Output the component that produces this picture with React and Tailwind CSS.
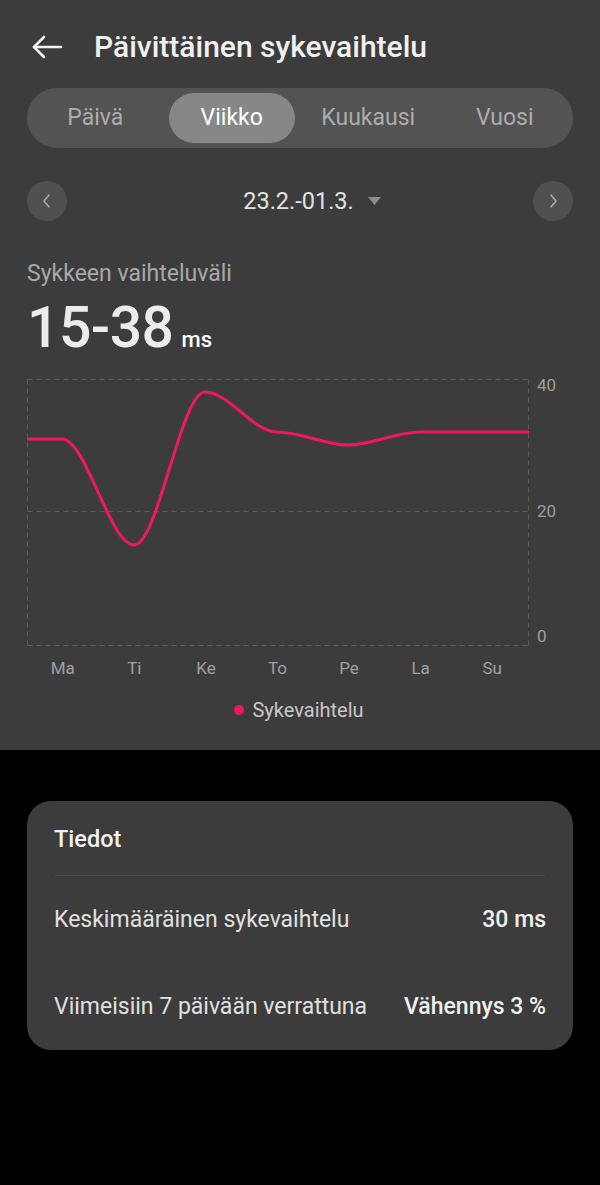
import React from 'react';

const days = ['Ma', 'Ti', 'Ke', 'To', 'Pe', 'La', 'Su'];
const tabs = ['Päivä', 'Viikko', 'Kuukausi', 'Vuosi'];

const HrvChart = () => (
    <svg width="546" height="276" viewBox="0 0 546 276" className="block">
        {/* grid, offset: x-27, y-373 */}
        <g transform="translate(0 4)">
            <g stroke="#5c5c5c" strokeWidth="1" strokeDasharray="5 4" fill="none">
                <line x1="0.5" y1="2.5" x2="501.5" y2="2.5" />
                <line x1="0.5" y1="134.5" x2="501.5" y2="134.5" />
                <line x1="0.5" y1="268.5" x2="501.5" y2="268.5" />
                <line x1="0.5" y1="2.5" x2="0.5" y2="268.5" />
                <line x1="501.5" y1="2.5" x2="501.5" y2="268.5" />
            </g>
            <path
                d="M0,62 L35,62 C59,62 83,168 107,168 C131,168 154,15 178,15 C202,15 226,55 250,55 C274,55 297,68 321,68 C345,68 369,55 393,55 L501,55"
                fill="none"
                stroke="#f2175d"
                strokeWidth="3"
                strokeLinecap="round"
            />
            <g fill="#9c9c9c" fontSize="17" fontFamily="Roboto, sans-serif">
                <text x="510" y="14">40</text>
                <text x="510" y="140">20</text>
                <text x="510" y="265">0</text>
            </g>
        </g>
    </svg>
);

export default function App() {
    return (
        <div className="w-[600px] h-[1185px] bg-black overflow-hidden" style={{ fontFamily: 'Roboto, "Noto Sans", sans-serif' }}>
            {/* Top panel */}
            <div className="bg-[#3c3c3c] h-[750px] px-[27px]">
                {/* Header */}
                <div className="h-[88px] flex items-center pt-[5px]">
                    <svg width="32" height="24" viewBox="0 0 32 24" className="ml-[4px]" fill="none" stroke="#f2f2f2" strokeWidth="2.6" strokeLinecap="round" strokeLinejoin="round">
                        <path d="M3 12 H30" />
                        <path d="M13 2 L3 12 L13 22" />
                    </svg>
                    <h1 className="ml-[31px] text-[30px] leading-[36px] font-medium text-[#f0f0f0]">Päivittäinen sykevaihtelu</h1>
                </div>

                {/* Period tabs */}
                <div className="h-[60px] rounded-full bg-[#535353] py-[5px] grid grid-cols-4">
                    {tabs.map((t) => (
                        <div
                            key={t}
                            className={`flex items-center justify-center rounded-full text-[23px] leading-[28px] ${t === 'Viikko' ? 'mx-[5px] bg-[#878787] text-white' : 'text-[#acacac]'}`}
                        >
                            {t}
                        </div>
                    ))}
                </div>

                {/* Date navigator */}
                <div className="mt-[33px] h-[40px] flex items-center justify-between">
                    <div className="w-[40px] h-[40px] rounded-full bg-[#505050] flex items-center justify-center">
                        <svg width="10" height="16" viewBox="0 0 10 16" fill="none" stroke="#a8a8a8" strokeWidth="1.6" strokeLinecap="round" strokeLinejoin="round">
                            <path d="M7 2 L2 8 L7 14" />
                        </svg>
                    </div>
                    <div className="flex items-center gap-[14px] text-[23.5px] leading-[28px] text-[#e2e2e2] ml-[24px]">
                        <span>23.2.-01.3.</span>
                        <svg width="13" height="8" viewBox="0 0 13 8">
                            <path d="M0 0 H13 L6.5 8 Z" fill="#8c8c8c" />
                        </svg>
                    </div>
                    <div className="w-[40px] h-[40px] rounded-full bg-[#505050] flex items-center justify-center">
                        <svg width="10" height="16" viewBox="0 0 10 16" fill="none" stroke="#a8a8a8" strokeWidth="1.6" strokeLinecap="round" strokeLinejoin="round">
                            <path d="M3 2 L8 8 L3 14" />
                        </svg>
                    </div>
                </div>

                {/* Range summary */}
                <div className="mt-[39px] text-[23px] leading-[28px] text-[#a8a8a8]">Sykkeen vaihteluväli</div>
                <div className="mt-[11px] flex items-baseline">
                    <span className="text-[57px] leading-none font-medium text-[#ececec] tracking-[-0.5px]">15-38</span>
                    <span className="ml-[8px] text-[22px] font-medium text-white">ms</span>
                </div>

                {/* Chart */}
                <div className="mt-[17px]">
                    <HrvChart />
                    <div className="w-[501px] grid grid-cols-7 mt-[9px] text-[17px] text-[#a0a0a0]">
                        {days.map((d) => (
                            <div key={d} className="text-center leading-[20px]">{d}</div>
                        ))}
                    </div>
                </div>

                {/* Legend */}
                <div className="mt-[20px] flex items-center justify-center gap-[8px] pr-[2px]">
                    <span className="w-[10px] h-[10px] rounded-full bg-[#f2175d]"></span>
                    <span className="text-[20px] leading-[24px] text-[#c8c8c8]">Sykevaihtelu</span>
                </div>
            </div>

            {/* Info card */}
            <div className="mt-[51px] mx-[27px] rounded-[24px] bg-[#3c3c3c] px-[27px]">
                <div className="pt-[22px] pb-[20px] text-[23.5px] leading-[32px] font-medium text-[#f2f2f2]">Tiedot</div>
                <div className="h-px bg-[#4a4a4a]"></div>
                <div className="h-[88px] flex items-center justify-between text-[23px]">
                    <span className="text-[#e0e0e0]">Keskimääräinen sykevaihtelu</span>
                    <span className="font-medium text-[#f0f0f0]">30 ms</span>
                </div>
                <div className="h-[86px] flex items-center justify-between text-[23px]">
                    <span className="text-[#e0e0e0]">Viimeisiin 7 päivään verrattuna</span>
                    <span className="font-medium text-[#f0f0f0]">Vähennys 3 %</span>
                </div>
            </div>
        </div>
    );
}
